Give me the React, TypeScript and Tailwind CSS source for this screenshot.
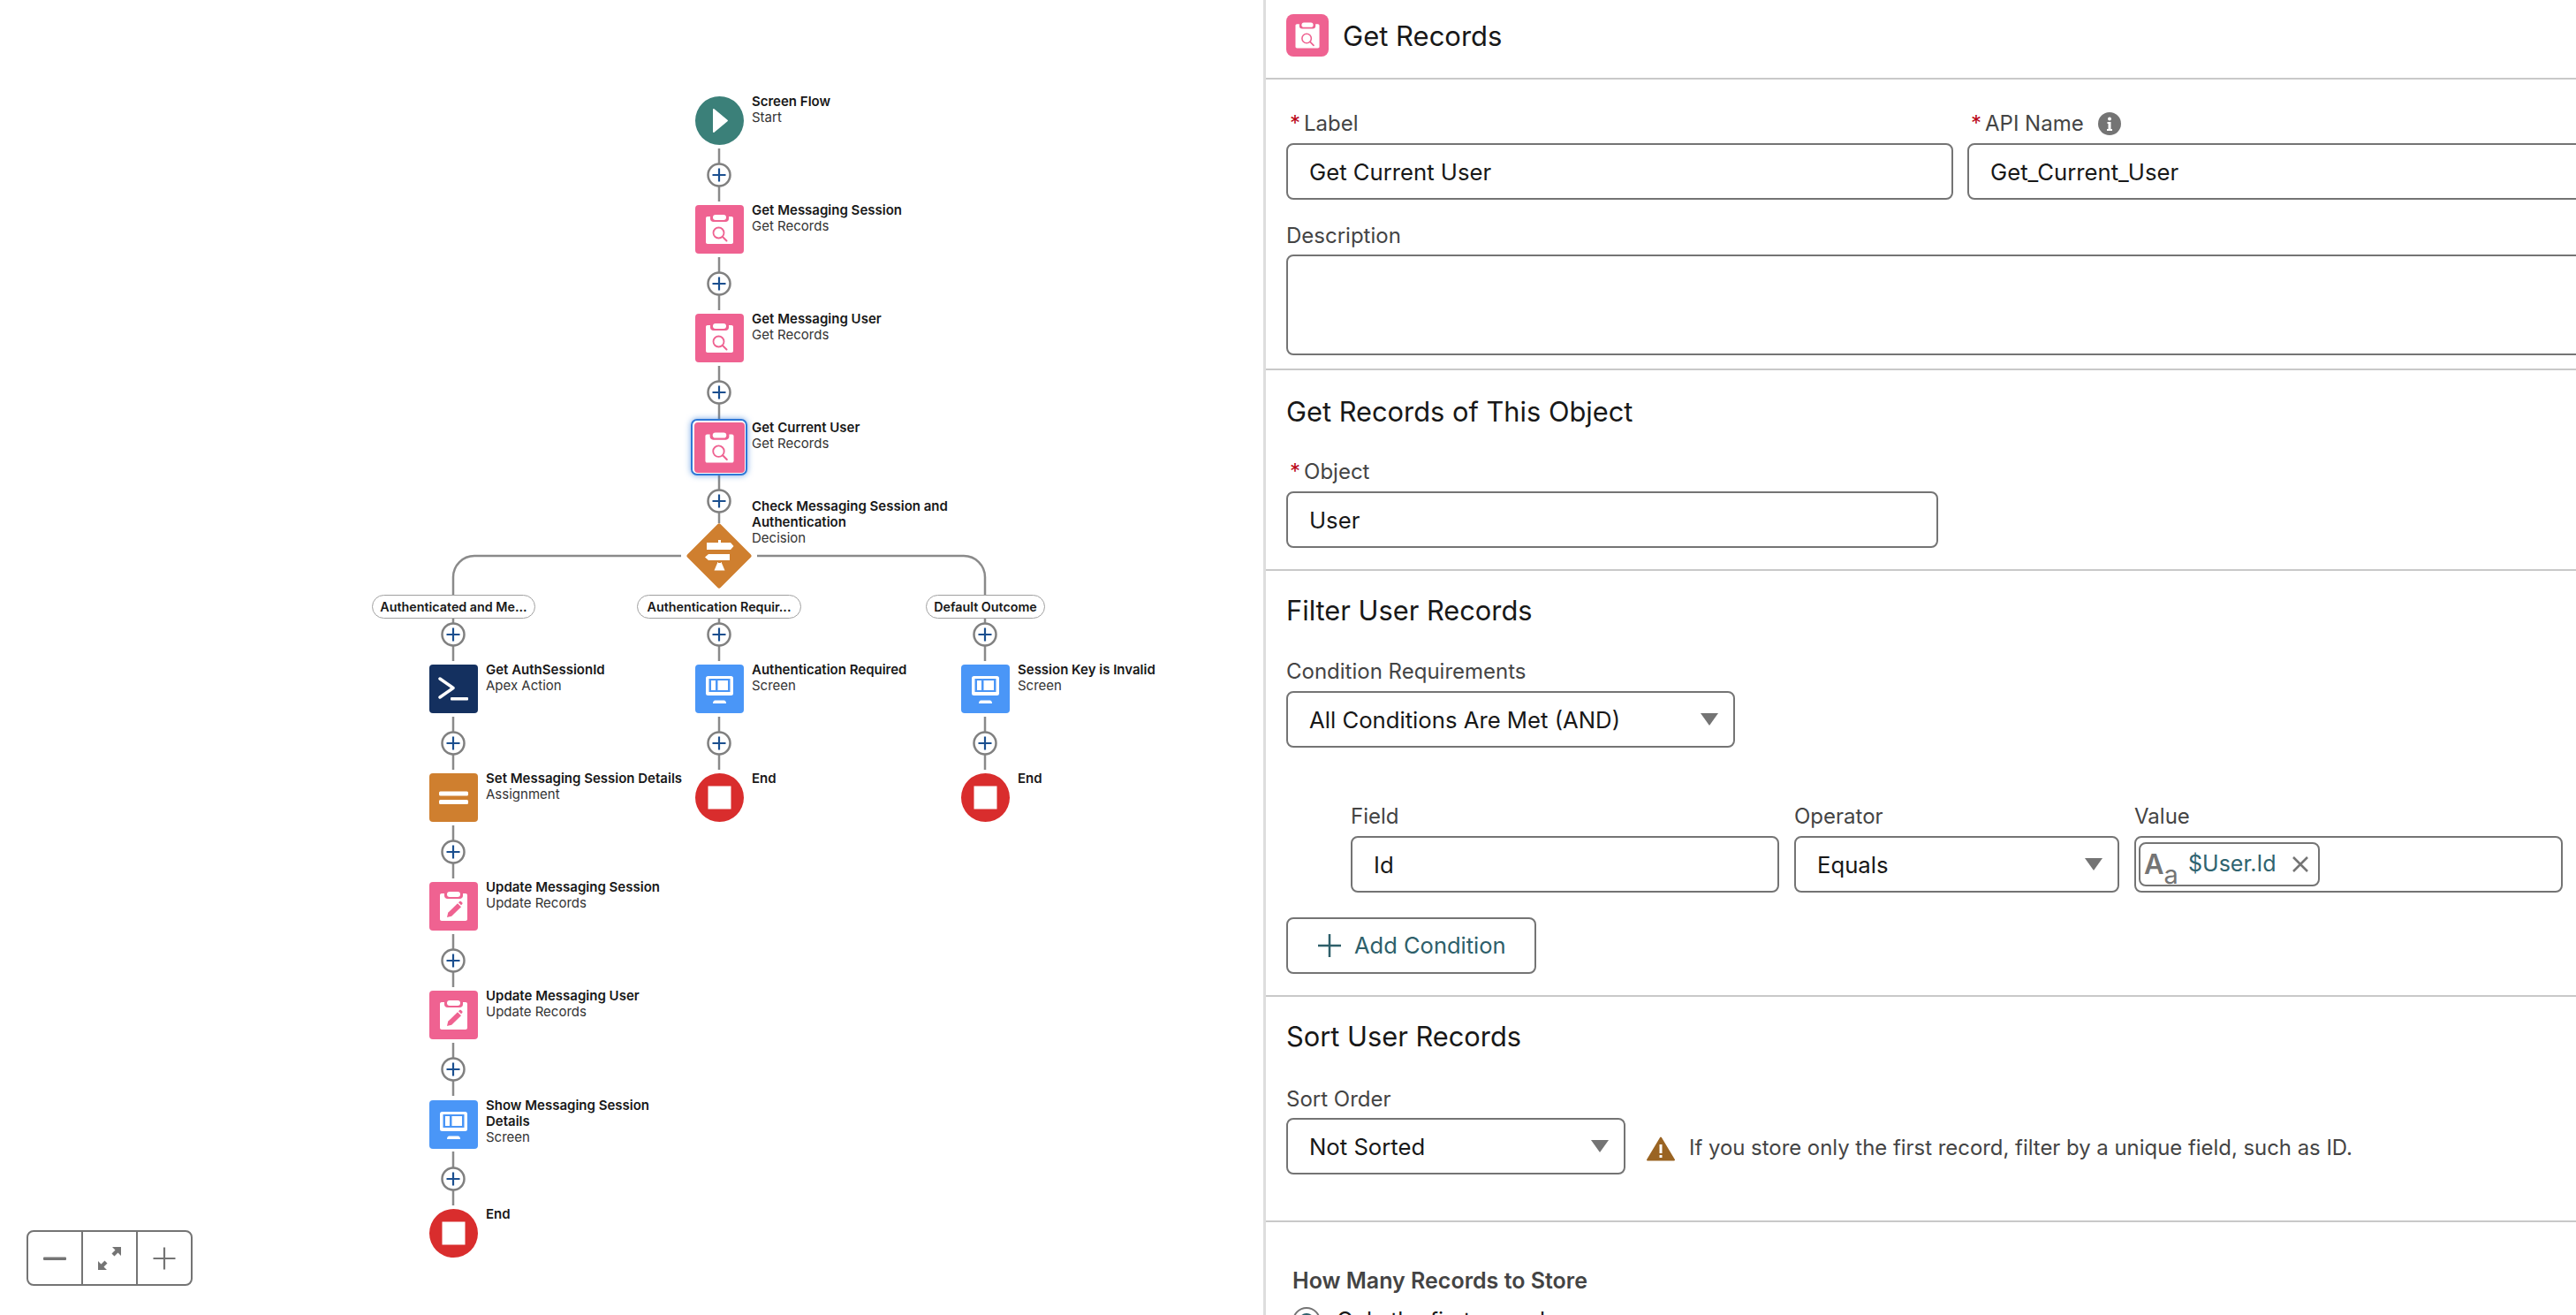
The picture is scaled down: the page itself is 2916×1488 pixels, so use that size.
import React from "react";

const PINK = "#ef6291";

const ClipboardBody = () => (
  <>
    <path
      d="M14 13h3v2.5c0 2 1.5 3.5 3.5 3.5h14c2 0 3.5-1.5 3.5-3.5V13h3c1.2 0 2 .8 2 2v27c0 1.2-.8 2-2 2H14c-1.2 0-2-.8-2-2V15c0-1.2.8-2 2-2z"
      fill="white"
    />
    <rect x="20" y="11" width="15" height="6" rx="3" fill="white" />
  </>
);

const GetRecordsIcon = () => (
  <svg viewBox="0 0 55 55" className="h-full w-full">
    <ClipboardBody />
    <circle cx="26.5" cy="31.5" r="6" fill="none" stroke={PINK} strokeWidth="1.8" />
    <path d="M31 36l4.5 4.5" stroke={PINK} strokeWidth="2" strokeLinecap="round" />
  </svg>
);

const UpdateRecordsIcon = () => (
  <svg viewBox="0 0 55 55" className="h-full w-full">
    <ClipboardBody />
    <path d="M20 40l1.2-5.2 10.8-10.6 4 4-10.8 10.6z" fill={PINK} />
    <path d="M33 23.2l1.2-1.2c.5-.5 1.2-.5 1.7 0l1.3 1.3c.5.5.5 1.2 0 1.7L36 26.2z" fill={PINK} />
  </svg>
);

const ScreenIcon = () => (
  <svg viewBox="0 0 55 55" className="h-full w-full">
    <rect x="12" y="13" width="31" height="22" rx="2.5" fill="white" />
    <rect x="15.5" y="16" width="24" height="15" fill="#4a96f7" />
    <rect x="18" y="18" width="5" height="11" fill="white" />
    <rect x="25.5" y="18" width="11.5" height="11" fill="white" />
    <path d="M20 44c0-2 1-3.5 2.5-3.5h10c1.500 0 2.500 1.500 2.500 3.500z" fill="white" />
  </svg>
);

const ApexIcon = () => (
  <svg viewBox="0 0 55 55" className="h-full w-full">
    <path d="M12 16l15 10.500-15 10.500" fill="none" stroke="white" strokeWidth="3.5" strokeLinecap="round" strokeLinejoin="round" />
    <rect x="24" y="37" width="20" height="3.500" rx="1" fill="white" />
  </svg>
);

const AssignmentIcon = () => (
  <svg viewBox="0 0 55 55" className="h-full w-full">
    <rect x="11" y="20.500" width="33" height="5" rx="1.500" fill="white" />
    <rect x="11" y="30" width="33" height="5" rx="1.500" fill="white" />
  </svg>
);

const StartIcon = () => (
  <svg viewBox="0 0 55 55" className="h-full w-full">
    <path d="M20 15v25a1 1 0 0 0 1.500.8l15-12.500a1 1 0 0 0 0-1.600l-15-12.500a1 1 0 0 0-1.500.8z" fill="white" />
  </svg>
);

const EndIcon = () => (
  <svg viewBox="0 0 55 55" className="h-full w-full">
    <rect x="14.500" y="14.500" width="26" height="26" fill="white" />
  </svg>
);

type Kind = "start" | "get" | "update" | "screen" | "apex" | "assign" | "end";

const KINDS: Record<Kind, { box: string; icon: React.ReactNode }> = {
  start: { box: "rounded-full bg-[#3b8079]", icon: <StartIcon /> },
  get: { box: "rounded-[4px] bg-[#ef6291]", icon: <GetRecordsIcon /> },
  update: { box: "rounded-[4px] bg-[#ef6291]", icon: <UpdateRecordsIcon /> },
  screen: { box: "rounded-[4px] bg-[#4a96f7]", icon: <ScreenIcon /> },
  apex: { box: "rounded-[4px] bg-[#14305f]", icon: <ApexIcon /> },
  assign: { box: "rounded-[4px] bg-[#cf7f2f]", icon: <AssignmentIcon /> },
  end: { box: "rounded-full bg-[#d92d2d]", icon: <EndIcon /> },
};

const NODES: { cx: number; y: number; kind: Kind; title: string; sub?: string }[] = [
  { cx: 814, y: 109, kind: "start", title: "Screen Flow", sub: "Start" },
  { cx: 814, y: 232, kind: "get", title: "Get Messaging Session", sub: "Get Records" },
  { cx: 814, y: 355, kind: "get", title: "Get Messaging User", sub: "Get Records" },
  { cx: 513, y: 752, kind: "apex", title: "Get AuthSessionId", sub: "Apex Action" },
  { cx: 513, y: 875, kind: "assign", title: "Set Messaging Session Details", sub: "Assignment" },
  { cx: 513, y: 998, kind: "update", title: "Update Messaging Session", sub: "Update Records" },
  { cx: 513, y: 1121, kind: "update", title: "Update Messaging User", sub: "Update Records" },
  { cx: 513, y: 1245, kind: "screen", title: "Show Messaging Session Details", sub: "Screen" },
  { cx: 513, y: 1368, kind: "end", title: "End" },
  { cx: 814, y: 752, kind: "screen", title: "Authentication Required", sub: "Screen" },
  { cx: 814, y: 875, kind: "end", title: "End" },
  { cx: 1115, y: 752, kind: "screen", title: "Session Key is Invalid", sub: "Screen" },
  { cx: 1115, y: 875, kind: "end", title: "End" },
];

const LINES: [number, number, number][] = [
  [814, 168, 228],
  [814, 291, 351],
  [814, 414, 478],
  [814, 535, 592],
  [814, 699, 748],
  [814, 811, 871],
  [1115, 699, 748],
  [1115, 811, 871],
  [513, 699, 748],
  [513, 811, 871],
  [513, 934, 994],
  [513, 1057, 1117],
  [513, 1180, 1240],
  [513, 1303, 1364],
];

const PLUSES: [number, number][] = [
  [814, 198],
  [814, 321],
  [814, 444],
  [814, 567],
  [814, 718],
  [814, 841],
  [1115, 718],
  [1115, 841],
  [513, 718],
  [513, 841],
  [513, 964],
  [513, 1087],
  [513, 1210],
  [513, 1334],
];

const PILLS = [
  { left: 421, width: 185, text: "Authenticated and Me..." },
  { left: 721, width: 186, text: "Authentication Requir..." },
  { left: 1048, width: 135, text: "Default Outcome" },
];

const NodeLabel = ({ left, top, title, sub }: { left: number; top: number; title: string; sub?: string }) => (
  <div className="absolute w-[230px] text-[15px] leading-[18px] text-[#181818]" style={{ left, top }}>
    <div className="font-semibold">{title}</div>
    {sub && <div className="text-[#333333]">{sub}</div>}
  </div>
);

const Connectors = () => (
  <svg viewBox="0 0 1430 1488" className="absolute inset-0 h-full w-full" fill="none">
    <g stroke="#8a8a8a" strokeWidth="2.500">
      {LINES.map(([x, a, b]) => (
        <path key={`${x}-${a}`} d={`M${x} ${a}V${b}`} />
      ))}
      <path d="M771 629H537a24 24 0 0 0-24 24v20" />
      <path d="M857 629H1091a24 24 0 0 1 24 24v20" />
    </g>
    {PLUSES.map(([x, y]) => (
      <g key={`${x}-${y}`}>
        <circle cx={x} cy={y} r="12.500" fill="white" stroke="#808080" strokeWidth="2.500" />
        <path d={`M${x - 7.500} ${y}h15M${x} ${y - 7.500}v15`} stroke="#1b4f8f" strokeWidth="2.200" />
      </g>
    ))}
  </svg>
);

const DecisionNode = () => (
  <svg viewBox="0 0 74 74" className="absolute left-[777px] top-[592px] h-[74px] w-[74px]">
    <path d="M37 3l34 34-34 34L3 37z" fill="#cf7f2f" stroke="#cf7f2f" strokeWidth="5" strokeLinejoin="round" />
    <path d="M36 19h3v3h11l3.500 4-3.500 4H39v5h10v7H39v3h-3v-3H25l-4-3.500 4-3.500h11v-5H23v-8h13z" fill="white" />
    <path d="M35.500 44h4l4 9.500h-12z" fill="white" />
    <path d="M36 30h3v5h-3zM36 42h3v3h-3z" fill="#cf7f2f" />
  </svg>
);

const ZoomControls = () => (
  <div className="absolute left-[30px] top-[1392px] flex h-[63px] w-[188px] divide-x-2 divide-[#747474] rounded-[8px] border-2 border-[#747474] bg-white">
    <button className="flex flex-1 items-center justify-center">
      <svg viewBox="0 0 28 28" className="h-[28px] w-[28px]">
        <rect x="1" y="12.500" width="26" height="3.500" rx="1" fill="#747474" />
      </svg>
    </button>
    <button className="flex flex-1 items-center justify-center">
      <svg viewBox="0 0 30 30" className="h-[30px] w-[30px]" fill="#747474">
        <path d="M18 2h10v10l-3.500-3.500-4 4-3-3 4-4zM12 28H2V18l3.500 3.500 4-4 3 3-4 4z" />
      </svg>
    </button>
    <button className="flex flex-1 items-center justify-center">
      <svg viewBox="0 0 28 28" className="h-[28px] w-[28px]">
        <path d="M14 1.500v25M1.500 14h25" stroke="#747474" strokeWidth="2.200" />
      </svg>
    </button>
  </div>
);

const Canvas = () => (
  <div className="relative h-full w-[1430px] shrink-0">
    <Connectors />
    {NODES.map((n) => (
      <React.Fragment key={`${n.title}-${n.cx}`}>
        <div
          className={`absolute h-[55px] w-[55px] ${KINDS[n.kind].box}`}
          style={{ left: n.cx - 27, top: n.y }}
        >
          {KINDS[n.kind].icon}
        </div>
        <NodeLabel left={n.cx + 37} top={n.y - 3} title={n.title} sub={n.sub} />
      </React.Fragment>
    ))}

    {/* selected node */}
    <div className="absolute left-[782px] top-[474px] flex h-[64px] w-[64px] items-center justify-center rounded-[7px] border-2 border-[#2f78d6] bg-white shadow-[0_0_7px_#2f78d6aa]">
      <div className="h-[57px] w-[57px] rounded-[4px] bg-[#ef6291]">
        <GetRecordsIcon />
      </div>
    </div>
    <NodeLabel left={851} top={475} title="Get Current User" sub="Get Records" />

    <DecisionNode />
    <NodeLabel left={851} top={564} title="Check Messaging Session and Authentication" sub="Decision" />

    {PILLS.map((p) => (
      <div
        key={p.text}
        className="absolute top-[673px] flex h-[27px] items-center justify-center whitespace-nowrap rounded-full border-[1.500px] border-[#a0a0a0] bg-white text-[14.300px] font-semibold text-[#181818]"
        style={{ left: p.left, width: p.width }}
      >
        {p.text}
      </div>
    ))}

    <ZoomControls />
  </div>
);

const FieldLabel = ({ children, required, className }: { children: React.ReactNode; required?: boolean; className?: string }) => (
  <div className={`flex h-[30px] items-center text-[24px] text-[#444444] ${className ?? ""}`}>
    {required && <span className="ml-[4px] mr-[4px] text-[#ba0517]">*</span>}
    {children}
  </div>
);

const TextBox = ({ value, className }: { value?: string; className?: string }) => (
  <div className={`flex h-[64px] items-center rounded-[8px] border-2 border-[#747474] bg-white pl-[24px] pt-[2px] text-[25.700px] text-[#181818] ${className ?? ""}`}>
    {value}
  </div>
);

const SelectBox = ({ value, className }: { value: string; className?: string }) => (
  <div className={`flex h-[64px] items-center justify-between rounded-[8px] border-2 border-[#747474] bg-white pl-[24px] pr-[17px] text-[25.700px] text-[#181818] ${className ?? ""}`}>
    <span className="pt-[2px]">{value}</span>
    <svg viewBox="0 0 20 14" className="h-[14px] w-[20px]">
      <path d="M0 0h20L10 14z" fill="#747474" />
    </svg>
  </div>
);

const Heading = ({ children }: { children: React.ReactNode }) => (
  <h2 className="flex h-[44px] items-center pt-[2px] text-[30.800px] font-normal text-[#181818]">{children}</h2>
);

const Panel = () => (
  <div className="h-full flex-1 overflow-hidden border-l-[3px] border-[#dddddd] bg-white">
    <div className="flex h-[90px] items-start gap-[16px] border-b-2 border-[#c9c9c9] pl-[23px] pt-[16px]">
      <div className="h-[48px] w-[48px] rounded-[8px] bg-[#ef6291]">
        <GetRecordsIcon />
      </div>
      <div className="flex h-[48px] items-center pt-[2px] text-[31px] text-[#181818]">Get Records</div>
    </div>

    <section className="border-b-2 border-[#c9c9c9] pb-[15px] pl-[23px] pt-[35px]">
      <div className="flex gap-[16px]">
        <div className="w-[755px] shrink-0">
          <FieldLabel required>Label</FieldLabel>
          <TextBox value="Get Current User" className="mt-[7px]" />
        </div>
        <div className="w-[800px] shrink-0">
          <FieldLabel required>
            API Name
            <svg viewBox="0 0 26 26" className="ml-[16px] h-[26px] w-[26px]">
              <circle cx="13" cy="13" r="13" fill="#747474" />
              <circle cx="13" cy="7.500" r="2" fill="white" />
              <path d="M10.500 11h4v8h1.500v2h-6v-2h1.500v-6h-1z" fill="white" />
            </svg>
          </FieldLabel>
          <TextBox value="Get_Current_User" className="mt-[7px]" />
        </div>
      </div>
      <FieldLabel className="mt-[26px]">Description</FieldLabel>
      <TextBox className="mt-[6px] h-[114px] w-[1600px]" />
    </section>

    <section className="border-b-2 border-[#c9c9c9] pb-[24px] pl-[23px] pt-[24px]">
      <Heading>Get Records of This Object</Heading>
      <FieldLabel required className="mt-[32px]">Object</FieldLabel>
      <TextBox value="User" className="mt-[7px] w-[738px]" />
    </section>

    <section className="border-b-2 border-[#c9c9c9] pb-[24px] pl-[23px] pt-[22px]">
      <Heading>Filter User Records</Heading>
      <FieldLabel className="mt-[33px]">Condition Requirements</FieldLabel>
      <SelectBox value="All Conditions Are Met (AND)" className="mt-[7px] w-[508px]" />
      <div className="ml-[73px] mt-[63px] flex gap-[17px]">
        <div className="w-[485px]">
          <FieldLabel>Field</FieldLabel>
          <TextBox value="Id" className="mt-[7px]" />
        </div>
        <div className="w-[368px]">
          <FieldLabel>Operator</FieldLabel>
          <SelectBox value="Equals" className="mt-[7px]" />
        </div>
        <div className="w-[485px]">
          <FieldLabel>Value</FieldLabel>
          <div className="mt-[7px] flex h-[64px] items-center rounded-[8px] border-2 border-[#747474] bg-white pl-[3px]">
            <div className="flex h-[50px] w-[205px] items-center rounded-[8px] border-2 border-[#747474] pl-[4px]">
              <span className="flex w-[50px] shrink-0 items-end text-[#747474]">
                <span className="text-[31px] font-semibold leading-[36px]">A</span>
                <span className="-mb-[9px] text-[29px] leading-[30px]">a</span>
              </span>
              <span className="text-[25px] text-[#2f6470]">$User.Id</span>
              <svg viewBox="0 0 20 20" className="ml-[17px] h-[20px] w-[20px]">
                <path d="M2 2l16 16M18 2L2 18" stroke="#747474" strokeWidth="2.500" />
              </svg>
            </div>
          </div>
        </div>
      </div>
      <button className="mt-[28px] flex h-[64px] w-[283px] items-center rounded-[8px] border-2 border-[#747474] bg-white pl-[34px] text-[25.500px] text-[#2e5f6a]">
        <svg viewBox="0 0 26 26" className="mr-[15px] h-[26px] w-[26px]">
          <path d="M13 0v26M0 13h26" stroke="#2e5f6a" strokeWidth="2.500" />
        </svg>
        Add Condition
      </button>
    </section>

    <section className="border-b-2 border-[#c9c9c9] pb-[52px] pl-[23px] pt-[22px]">
      <Heading>Sort User Records</Heading>
      <FieldLabel className="mt-[35px]">Sort Order</FieldLabel>
      <div className="mt-[6px] flex items-center">
        <SelectBox value="Not Sorted" className="w-[384px]" />
        <svg viewBox="0 0 32 28" className="ml-[24px] mt-[6px] h-[28px] w-[32px]">
          <path d="M16 1.500L31 26.500H1z" fill="#9a6423" stroke="#9a6423" strokeWidth="2" strokeLinejoin="round" />
          <rect x="14.500" y="9" width="3" height="10" fill="white" />
          <rect x="14.500" y="21" width="3" height="3" fill="white" />
        </svg>
        <span className="ml-[16px] mt-[3px] whitespace-nowrap text-[23.900px] text-[#444444]">
          If you store only the first record, filter by a unique field, such as ID.
        </span>
      </div>
    </section>

    <section className="pl-[30px] pt-[49px]">
      <h3 className="flex h-[36px] items-center text-[25px] font-semibold text-[#444444]">How Many Records to Store</h3>
      <div className="mt-[8px] flex items-center">
        <span className="flex h-[32px] w-[32px] items-center justify-center rounded-full border-2 border-[#747474]">
          <span className="h-[18px] w-[18px] rounded-full bg-[#2e5f6a]" />
        </span>
        <span className="ml-[18px] text-[25px] text-[#181818]">Only the first record</span>
      </div>
    </section>
  </div>
);

export default function App() {
  return (
    <div className="flex h-[1488px] w-[2916px] overflow-hidden bg-white font-['Inter',sans-serif]">
      <Canvas />
      <Panel />
    </div>
  );
}
